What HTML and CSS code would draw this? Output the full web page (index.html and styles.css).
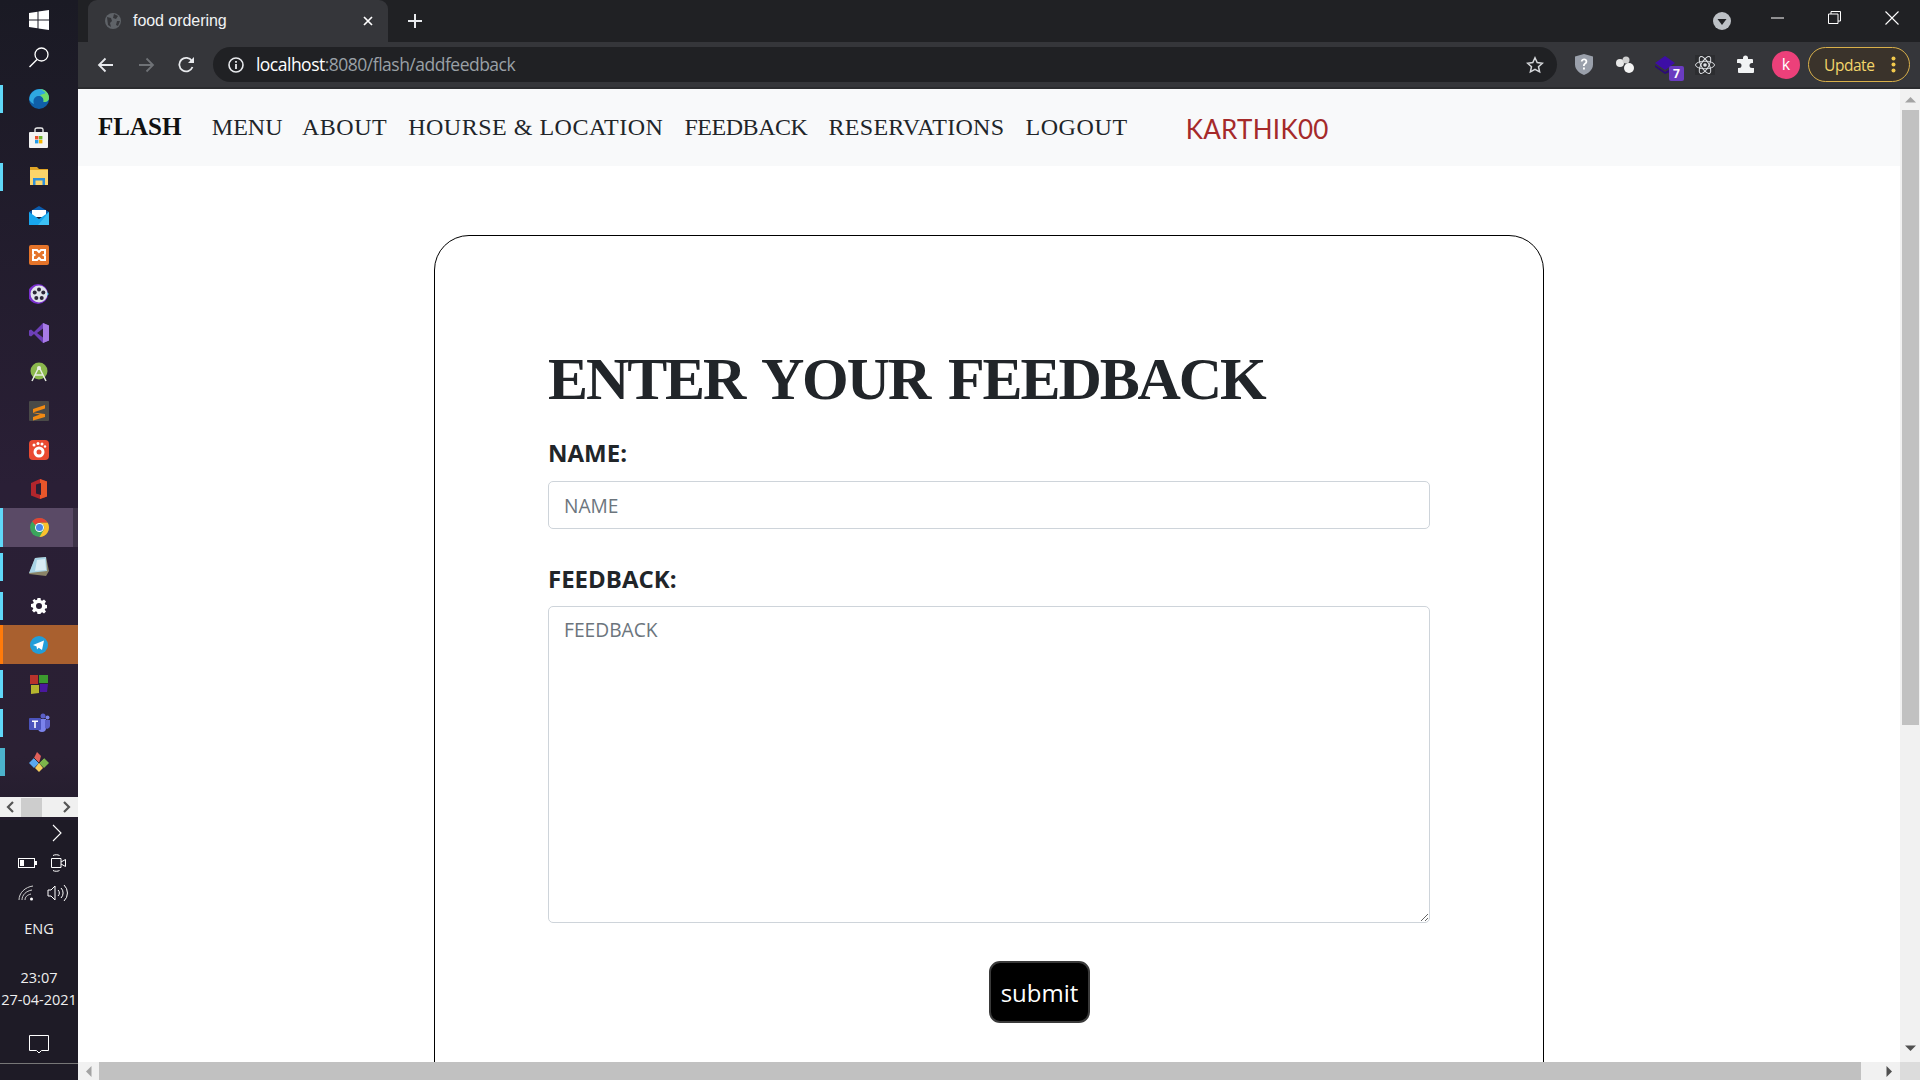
FILE: index.html
```html
<!DOCTYPE html>
<html lang="en">
<head>
<meta charset="utf-8">
<title>food ordering</title>
<link rel="stylesheet" href="styles.css">
</head>
<body>
<div class="desktop">
  <aside class="taskbar">
    <div class="tb-icons">
      <div class="tb-item tb-win"><svg width="20" height="20" viewBox="0 0 20 20"><path fill="#fff" d="M0 3l8.500-1.200v7.700H0zM9.500 1.600L20 0v9.500H9.500zM0 10.500h8.500v7.700L0 17zM9.500 10.500H20V20L9.500 18.400z"/></svg></div>
      <div class="tb-item tb-search"><svg width="22" height="22" viewBox="0 0 22 22"><circle cx="13.500" cy="8.500" r="6.500" fill="none" stroke="#fff" stroke-width="1.300"/><path d="M9 13.500L1.500 21" stroke="#fff" stroke-width="1.500"/></svg></div>
      <div class="tb-item tb-run"><svg width="20" height="20" viewBox="0 0 20 20"><circle cx="10" cy="10" r="10" fill="#0f5fa8"/><path d="M.3 11C0 4 6 0 11 0c5 0 9 4 9 9 0 3-3 4.500-5.500 4 1-4-2-6.500-5.500-6-3.500.5-5.500 4-4 8C3 14 1 12.500.3 11z" fill="#2fa8e0"/><path d="M11 0c5 0 9 4 9 9 0 3-3 4.500-5.500 4 .5-3-1-5.500-3.500-6.500 2-1.500 5-2 5.500-2.500C15.500 2.500 13 .5 11 0z" fill="#6fdc6a"/></svg></div>
      <div class="tb-item"><svg width="20" height="21" viewBox="0 0 20 21"><path d="M6 6V2.500C6 1.500 7 1 8 1h4c1 0 2 .5 2 1.500V6" fill="none" stroke="#eee" stroke-width="1.300"/><rect y="5" width="19" height="16" rx="1" fill="#f2f2f2"/><rect x="6" y="9" width="3.400" height="3.400" fill="#e8512a"/><rect x="10" y="9" width="3.400" height="3.400" fill="#6eb52c"/><rect x="6" y="13" width="3.400" height="3.400" fill="#1e9bea"/><rect x="10" y="13" width="3.400" height="3.400" fill="#f5b400"/></svg></div>
      <div class="tb-item tb-run"><svg width="20" height="19" viewBox="0 0 20 19"><path d="M1 0h7l2 2h9v3H1z" fill="#e0a526"/><rect x="1" y="3" width="18" height="15" fill="#fbd56a"/><path d="M4 18v-7h12v7h-2.500v-4.500h-7V18z" fill="#2f8fd8"/></svg></div>
      <div class="tb-item"><svg width="20" height="19" viewBox="0 0 20 19"><path d="M0 6l10-6 10 6v4H0z" fill="#0b5cad"/><path d="M3 4h14v7H3z" fill="#fff"/><path d="M0 6l10 7 10-7v13H0z" fill="#18a6ee"/><path d="M20 6v13H9z" fill="#3cc1f5"/></svg></div>
      <div class="tb-item"><svg width="20" height="20" viewBox="0 0 20 20"><rect width="20" height="20" rx="2" fill="#e5742a"/><path d="M4 5h4l2 2 2-2h4v4l-1.500 1 1.500 1v4h-4l-2-2-2 2H4v-4l1.500-1L4 9z" fill="none" stroke="#fff" stroke-width="2"/></svg></div>
      <div class="tb-item"><svg width="20" height="20" viewBox="0 0 20 20"><circle cx="9" cy="10" r="10" fill="#7a2fd0"/><path d="M14 5l6 5-6 5z" fill="#25b5ea"/><circle cx="10" cy="10" r="8.500" fill="#dfe3ea"/><circle cx="10" cy="5.500" r="2" fill="#2b2738"/><circle cx="5.700" cy="8.500" r="2" fill="#2b2738"/><circle cx="14.300" cy="8.500" r="2" fill="#2b2738"/><circle cx="7.300" cy="14" r="2" fill="#2b2738"/><circle cx="12.700" cy="14" r="2" fill="#2b2738"/></svg></div>
      <div class="tb-item"><svg width="20" height="20" viewBox="0 0 20 20"><path d="M14 0l6 2.500v15L14 20 5 11l-3 2.500L0 12.500v-5L2 6.500l3 2.500z" fill="#6d3fb8"/><path d="M14 0l6 2.500v15L14 20z" fill="#a77be6"/><path d="M14 5.500L8 10l6 4.500z" fill="#2a2135"/></svg></div>
      <div class="tb-item"><svg width="20" height="20" viewBox="0 0 20 20"><circle cx="10" cy="9" r="8.500" fill="#8bb84d"/><path d="M3 19l6-12h2l6 12M6 13h8" fill="none" stroke="#e8ece2" stroke-width="1.500"/><circle cx="10" cy="6" r="2" fill="#e8ece2"/></svg></div>
      <div class="tb-item"><svg width="20" height="20" viewBox="0 0 20 20"><rect width="20" height="20" rx="1" fill="#4a4a48"/><path d="M4 8l12-4v3.500L4 11.500zM4 11.500l12 1.500v3L4 19.500V16l7-2.500L4 12z" fill="#f28a13"/></svg></div>
      <div class="tb-item"><svg width="20" height="20" viewBox="0 0 20 20"><rect width="20" height="20" rx="4" fill="#ea4a31"/><circle cx="10" cy="12" r="5.500" fill="#fff"/><circle cx="10" cy="12" r="2.500" fill="#ea4a31"/><circle cx="5" cy="5" r="1.500" fill="#fff"/><circle cx="9" cy="3.500" r="1.500" fill="#fff"/><circle cx="13" cy="4" r="1.500" fill="#fff"/><circle cx="16" cy="6.500" r="1.200" fill="#fff"/></svg></div>
      <div class="tb-item"><svg width="16" height="20" viewBox="0 0 16 20"><path d="M0 4l9-4 7 2.500v15L9 20l-9-3.500z" fill="#b3262c"/><path d="M9 0l7 2.500v15L9 20z" fill="#e8562a"/><path d="M5 5.500l5-1.500v12l-5-1.500z" fill="#2a1f35"/></svg></div>
      <div class="tb-item tb-run tb-active"><svg width="19" height="19" viewBox="0 0 20 20"><circle cx="10" cy="10" r="10" fill="#3ba55d"/><path d="M10 0a10 10 0 0 1 8.660 5H10a5 5 0 0 0-4.300 2.500L2.300 3.500A10 10 0 0 1 10 0z" fill="#e34234"/><path d="M18.660 5A10 10 0 0 1 10 20l4.300-7.500A5 5 0 0 0 10 5z" fill="#fbc02d"/><circle cx="10" cy="10" r="4.700" fill="#fff"/><circle cx="10" cy="10" r="3.700" fill="#4a86e8"/></svg></div>
      <div class="tb-item tb-run"><svg width="20" height="20" viewBox="0 0 20 20"><path d="M6 1l11-1 3 14-3 5-17-2z" fill="#8a8468"/><path d="M6 1l11-1 1 14L0 16z" fill="#a9d4e6"/><path d="M8 3l8-1 1 11-11 1z" fill="#d9edf5"/></svg></div>
      <div class="tb-item tb-run"><svg width="16" height="16" viewBox="0 0 16 16"><path fill="#fff" fill-rule="evenodd" d="M6.500 0h3l.4 2.200 1.300.6L13 1.500l2 2-1.300 1.900.6 1.300 2.200.4v3l-2.200.4-.6 1.300 1.300 1.800-2 2-1.800-1.300-1.300.6L9.500 16h-3l-.4-2.100-1.300-.6L3 14.500l-2-2 1.300-1.800-.6-1.300L0 9V6l2.200-.4.6-1.300L1.500 2.500l2-1.500 1.300 1.300 1.300-.6zM8 5a3 3 0 1 0 0 6 3 3 0 0 0 0-6z"/></svg></div>
      <div class="tb-item tb-alert"><svg width="18" height="18" viewBox="0 0 18 18"><circle cx="9" cy="9" r="9" fill="#229ed9"/><path d="M3 9l11-4.500-2 9.500-3.300-2.300L7 13.500l-.4-3z" fill="#fff"/></svg></div>
      <div class="tb-item tb-run"><svg width="20" height="20" viewBox="0 0 20 20"><path d="M1 1l8 0v9H1z" fill="#b8332c"/><path d="M10 1h9v8h-9z" fill="#3c9a2e"/><path d="M2 11h8v8l-8 1z" fill="#b5b52e"/><path d="M11 10h8l-1 8h-7z" fill="#4a189e"/></svg></div>
      <div class="tb-item tb-run"><svg width="21" height="20" viewBox="0 0 21 20"><circle cx="14" cy="3" r="2.500" fill="#5b5fc7"/><circle cx="18.500" cy="4.500" r="2" fill="#7b83eb"/><path d="M9 6h8v9a4 4 0 0 1-8 0z" fill="#7b83eb"/><path d="M16 7h5v6a3 3 0 0 1-5 2z" fill="#5b5fc7"/><rect y="5" width="12" height="12" rx="1" fill="#4b53bc"/><path d="M3 7.500h6v1.600H6.800V15H5.200V9.100H3z" fill="#fff"/></svg></div>
      <div class="tb-item tb-run tb-double"><svg width="20" height="20" viewBox="0 0 20 20"><path d="M5 6l5 5-5 5-5-5z" fill="#5aa8ef"/><path d="M15 6l5 5-5 5-5-5z" fill="#7db54a"/><path d="M10 11l4 5-4 4-4-4z" fill="#f3cc5f"/><path d="M8 0l4 4-2 7-5-5z" fill="#e0605a"/><path d="M5 6l5 5 5-5" stroke="#333" stroke-width="1" fill="none"/></svg></div>
    </div>
    <div class="tb-scroll">
      <svg width="10" height="14" viewBox="0 0 10 14"><path d="M8 2L3 7l5 5" fill="none" stroke="#555" stroke-width="2.200"/></svg>
      <span class="tb-thumb"></span>
      <svg class="tb-next" width="10" height="14" viewBox="0 0 10 14"><path d="M2 2l5 5-5 5" fill="none" stroke="#555" stroke-width="2.200"/></svg>
    </div>
    <div class="tray">
      <div class="tray-chevron"><svg width="12" height="18" viewBox="0 0 12 18"><path d="M2 1l8 8-8 8" fill="none" stroke="#fff" stroke-width="1.100"/></svg></div>
      <div class="tray-row">
        <svg width="20" height="12" viewBox="0 0 20 12"><rect x=".5" y="1.500" width="16" height="9" fill="none" stroke="#fff"/><rect x="2" y="3" width="4" height="6" fill="#fff"/><rect x="17" y="4" width="2" height="4" fill="#fff"/></svg>
        <svg width="15" height="18" viewBox="0 0 15 18"><path d="M.5 4.500h9.500v9H.5zM10 8l4.500-2.500v7L10 10M2 1.500C3.500.5 7 .5 8.500 1.500M2 16.500c1.500 1 5 1 6.500 0" fill="none" stroke="#fff"/></svg>
      </div>
      <div class="tray-row">
        <svg width="17" height="16" viewBox="0 0 17 16"><g fill="none" stroke="#cfcfcf"><path d="M1 15C1 8 7 2 15 1"/><path d="M4 15c0-5 4-9 10-10"/><path d="M7 15c0-3 2-5 6-6"/></g><circle cx="13.500" cy="14" r="1.500" fill="#fff"/></svg>
        <svg width="21" height="18" viewBox="0 0 21 18"><path d="M1 6v6h3l4 4V2L4 6zM11 6a4 4 0 0 1 0 6M14 4a7 7 0 0 1 0 10M17 1a11 11 0 0 1 0 16" fill="none" stroke="#fff"/></svg>
      </div>
      <div class="tray-lang">ENG</div>
      <div class="tray-clock"><div>23:07</div><div>27-04-2021</div></div>
      <div class="tray-note"><svg width="20" height="20" viewBox="0 0 20 20"><path d="M.5 1.500h19v15h-7L10 19l-2.500-2.500h-7z" fill="none" stroke="#fff"/></svg></div>
    </div>
  </aside>

  <main class="browser">
    <div class="tabstrip">
      <div class="tab">
        <svg class="favicon" width="16" height="16" viewBox="0 0 16 16"><circle cx="8" cy="8" r="8" fill="#5f6368"/><path d="M2 4l4 1 1 3-2 2 1 4-3-2zM9 1l4 2-2 3-3-1zM12 8l3 0-2 5-2-1z" fill="#35363a"/></svg>
        <span class="tab-title">food ordering</span>
        <svg width="10" height="10" viewBox="0 0 10 10"><path d="M1 1l8 8M9 1l-8 8" stroke="#fff" stroke-width="1.700"/></svg>
      </div>
      <svg class="newtab" width="14" height="14" viewBox="0 0 14 14"><path d="M7 0v14M0 7h14" stroke="#e8eaed" stroke-width="2"/></svg>
      <div class="winctl">
        <svg class="profile-drop" width="18" height="18" viewBox="0 0 18 18"><circle cx="9" cy="9" r="9" fill="#bdc1c6"/><path d="M4.500 7h9L9 13z" fill="#202124"/></svg>
        <span class="winbtn"><svg width="13" height="2" viewBox="0 0 13 2"><path d="M0 1h13" stroke="#fff"/></svg></span>
        <span class="winbtn"><svg width="13" height="13" viewBox="0 0 13 13"><path d="M.5 3h9.500v9.500H.5zM3 3V.5h9.500V10H10" fill="none" stroke="#fff"/></svg></span>
        <span class="winbtn"><svg width="14" height="14" viewBox="0 0 14 14"><path d="M.5.5l13 13M13.500.5l-13 13" stroke="#fff" stroke-width="1.100"/></svg></span>
      </div>
    </div>
    <div class="toolbar">
      <span class="navbtn"><svg width="17" height="16" viewBox="0 0 17 16"><path d="M16 8H2M8.500 1.500L2 8l6.500 6.500" fill="none" stroke="#e8eaed" stroke-width="1.800"/></svg></span>
      <span class="navbtn"><svg width="17" height="16" viewBox="0 0 17 16"><path d="M1 8h14M8.500 1.500L15 8l-6.500 6.500" fill="none" stroke="#6f7276" stroke-width="1.800"/></svg></span>
      <span class="navbtn"><svg width="17" height="17" viewBox="0 0 17 17"><path d="M14.500 11a6.800 6.800 0 1 1-.6-6" fill="none" stroke="#e8eaed" stroke-width="1.800"/><path d="M16 1v6h-6z" fill="#e8eaed"/></svg></span>
      <div class="omnibox">
        <svg width="16" height="16" viewBox="0 0 16 16"><circle cx="8" cy="8" r="7" fill="none" stroke="#e8eaed" stroke-width="1.600"/><path d="M8 7v5M8 4v1.800" stroke="#e8eaed" stroke-width="1.800"/></svg>
        <span class="url"><span class="url-host">localhost</span>:8080/flash/addfeedback</span>
        <svg class="star" width="18" height="18" viewBox="0 0 18 18"><path d="M9 1.800l2.200 4.800 5.200.6-3.900 3.500 1.100 5.200L9 13.300l-4.600 2.600 1.100-5.200-3.900-3.500 5.200-.6z" fill="none" stroke="#d5d7da" stroke-width="1.500"/></svg>
      </div>
      <div class="exts">
        <span class="ext"><svg width="18" height="21" viewBox="0 0 18 21"><path d="M9 0l9 2.500v8C18 16 13 19.500 9 21 5 19.500 0 16 0 10.500v-8z" fill="#9aa0ab"/><path d="M5.800 7.500C6 3.500 12.500 3.500 12.300 7.500c0 2.500-2.500 2.500-2.500 4.500H8c0-3 2.500-3 2.500-4.500C10.500 5.800 7.800 5.800 7.600 7.500zM8 13.500h1.900v2H8z" fill="#fff"/></svg></span>
        <span class="ext"><svg width="20" height="20" viewBox="0 0 20 20"><circle cx="5" cy="8" r="4" fill="#e8e8e8"/><circle cx="11" cy="5" r="3.500" fill="#cfcfcf"/><circle cx="14" cy="13" r="5" fill="#f4f4f4"/></svg></span>
        <span class="ext ext-badged"><svg width="20" height="18" viewBox="0 0 20 18"><path d="M10 0l10 7-10 7L0 7z" fill="#3d0ea6"/><path d="M0 9l10 7 5-3v3l-5 2L0 11z" fill="#2c0a78"/></svg><b class="badge">7</b></span>
        <span class="ext"><svg class="react" width="20" height="20" viewBox="0 0 20 20"><g fill="none" stroke="#dfe1e5" stroke-width="1"><ellipse cx="10" cy="10" rx="9.500" ry="3.800"/><ellipse cx="10" cy="10" rx="9.500" ry="3.800" transform="rotate(60 10 10)"/><ellipse cx="10" cy="10" rx="9.500" ry="3.800" transform="rotate(120 10 10)"/></g><circle cx="10" cy="10" r="1.800" fill="#dfe1e5"/></svg></span>
        <span class="ext"><svg width="19" height="19" viewBox="0 0 19 19"><path d="M7 3a2.500 2.500 0 0 1 5 0v1h4a1 1 0 0 1 1 1v3h-1a2.500 2.500 0 0 0 0 5h2v4a1 1 0 0 1-1 1H3a1 1 0 0 1-1-1v-4h1a2.500 2.500 0 0 0 0-5H1V5a1 1 0 0 1 1-1h5z" fill="#f1f3f4"/></svg></span>
        <span class="avatar">k</span>
      </div>
      <div class="update">
        <span class="update-text">Update</span>
        <svg width="5" height="17" viewBox="0 0 5 17"><circle cx="2.500" cy="2.500" r="2" fill="#f2c94c"/><circle cx="2.500" cy="8.500" r="2" fill="#f2c94c"/><circle cx="2.500" cy="14.500" r="2" fill="#f2c94c"/></svg>
      </div>
    </div>

    <div class="viewport">
      <div class="page">
        <nav class="navbar">
          <a class="brand">FLASH</a>
          <a class="nav-link nav-menu">MENU</a>
          <a class="nav-link nav-about">ABOUT</a>
          <a class="nav-link nav-hours">HOURSE &amp; LOCATION</a>
          <a class="nav-link nav-feedback">FEEDBACK</a>
          <a class="nav-link nav-reserve">RESERVATIONS</a>
          <a class="nav-link nav-logout">LOGOUT</a>
          <span class="username">KARTHIK00</span>
        </nav>
        <section class="card">
          <h1 class="title">ENTER YOUR FEEDBACK</h1>
          <form class="form">
            <label class="label" for="name">NAME:</label>
            <input class="control input" id="name" type="text" placeholder="NAME">
            <label class="label label-gap" for="fb">FEEDBACK:</label>
            <textarea class="control textarea" id="fb" placeholder="FEEDBACK"></textarea>
            <button class="submit" type="button">submit</button>
          </form>
        </section>
      </div>
      <div class="vscroll">
        <svg width="13" height="7" viewBox="0 0 13 7"><path d="M6.500 1L12 6.500H1z" fill="#a3a3a3"/></svg>
        <span class="vthumb"></span>
        <svg width="13" height="7" viewBox="0 0 13 7"><path d="M6.500 6L12 .5H1z" fill="#505050"/></svg>
      </div>
    </div>
    <div class="hscroll">
      <svg width="7" height="13" viewBox="0 0 7 13"><path d="M1 6.500L6.500 1v11z" fill="#a3a3a3"/></svg>
      <span class="hthumb"></span>
      <svg width="7" height="13" viewBox="0 0 7 13"><path d="M6 6.500L.5 1v11z" fill="#505050"/></svg>
      <span class="corner"></span>
    </div>
  </main>
</div>
</body>
</html>
```
FILE: styles.css
```css
* { box-sizing: border-box; }
html, body { margin: 0; height: 100%; overflow: hidden; }
.desktop { display: flex; width: 1920px; height: 1080px; font-family: "Open Sans", sans-serif; }

/* taskbar */
.taskbar {
  width: 78px; flex: none; display: flex; flex-direction: column;
  background: linear-gradient(#1a1a24 0, #2a1f36 45%, #2a2033 70%, #1f1b29 80%, #1c1c26 100%);
  color: #fff;
}
.tb-icons { height: 797px; padding-top: 1px; }
.tb-item { height: 39px; display: flex; align-items: center; justify-content: center; position: relative; }
.tb-win svg { margin-bottom: 2px; }
.tb-search svg { margin-bottom: 5px; }
.tb-run::before {
  content: ""; position: absolute; left: 0; top: 6px; width: 3px; height: 28px; background: #60d8f8;
}
.tb-double::before { width: 5px; background: #4cb3cc; }
.tb-active { background: linear-gradient(90deg, #5a4a66 0, #5a4a66 73px, #3e3448 73px); }
.tb-active::before { top: 0; height: 39px; }
.tb-alert { background: #a9602f; }
.tb-alert::before { content: ""; position: absolute; left: 0; top: 0; width: 3px; height: 39px; background: #ff7a0a; }
.tb-scroll {
  height: 20px; background: #f0f0f0; display: flex; align-items: center;
  padding: 0 6px 0 5px;
}
.tb-thumb { width: 21px; height: 19px; margin-left: 6px; background: #cdcdcd; }
.tb-next { margin-left: auto; }
.tray { flex: 1; display: flex; flex-direction: column; background: #1e1b26; margin-top: 3px; }
.tray-chevron { height: 28px; display: flex; align-items: center; justify-content: flex-end; padding: 0 15px 2px 0; }
.tray-row { height: 30px; display: flex; align-items: center; justify-content: space-between; padding: 0 12px 0 18px; }
.tray-row + .tray-row { padding-right: 10px; }
.tray-lang { height: 34px; margin-top: 4px; text-align: center; font-size: 14.500px; line-height: 34px; color: #eee; }
.tray-clock { margin-top: 21px; text-align: center; font-size: 14.500px; line-height: 22px; color: #eee; white-space: nowrap; }
.tray-note { display: flex; justify-content: center; margin-top: 23px; height: 30px; border-bottom: 1px solid #777; }

/* browser chrome */
.browser { flex: 1; min-width: 0; display: flex; flex-direction: column; }
.tabstrip { height: 42px; flex: none; background: #202124; display: flex; align-items: center; padding-left: 10px; }
.tab {
  width: 300px; height: 42px; background: #35363a; border-radius: 9px 9px 0 0;
  display: flex; align-items: center; padding: 0 15px 0 17px; color: #fff;
}
.favicon { flex: none; }
.tab-title { flex: 1; margin-left: 12px; font: 16px "Liberation Sans", sans-serif; color: #f1f3f4; letter-spacing: -.05px; }
.newtab { margin-left: 20px; }
.winctl { margin-left: auto; display: flex; align-items: center; height: 42px; }
.profile-drop { margin-right: 18px; }
.winbtn { width: 57px; height: 35px; margin-bottom: 7px; display: flex; align-items: center; justify-content: center; }
.toolbar {
  height: 47px; flex: none; background: #35363a; border-bottom: 2px solid #2b2c2f;
  display: flex; align-items: center; padding: 0 10px 0 8px;
}
.navbtn { width: 40px; margin-right: .5px; display: flex; justify-content: center; }
.omnibox {
  width: 1345px; height: 35px; margin-left: 5.500px; background: #202124; border-radius: 18px;
  display: flex; align-items: center; padding: 0 13px 0 15px;
}
.url { flex: 1; margin-left: 12px; font: 17.500px/34px "Open Sans", sans-serif; height: 35px; letter-spacing: -.5px; color: #9aa0a6; }
.url-host { color: #fff; }
.exts { display: flex; align-items: center; margin-left: 7px; }
.ext { width: 40.400px; height: 35px; display: flex; align-items: center; justify-content: center; position: relative; }
.badge {
  position: absolute; left: 24px; top: 19px; width: 15px; height: 15px; border-radius: 2px;
  background: #6a3cc0; color: #fff; font: bold 12px/15px "Open Sans", sans-serif; text-align: center;
}
.react { background: #2c2d30; }
.avatar {
  width: 28px; height: 28px; margin-left: 6px; border-radius: 50%; background: #ec407a; color: #fff;
  font: 16px/27px "Open Sans", sans-serif; text-align: center;
}
.update {
  width: 102px; height: 35px; margin-left: 8px; border: 1px solid #d9b04a; border-radius: 18px; background: #3a332b;
  display: flex; align-items: center; justify-content: space-between; padding: 0 13px 0 15px;
}
.update-text { font: 15.500px "Open Sans", sans-serif; color: #f3d56a; letter-spacing: -.45px; }

/* page */
.viewport { flex: 1; min-height: 0; display: flex; }
.page { flex: 1; min-width: 0; overflow: hidden; background: #fff; }
.navbar { height: 77px; background: #f8f9fa; display: flex; align-items: center; padding: 0 0 1px 20px; }
.brand { font: bold 25px "Liberation Serif", serif; color: #111; margin-right: 30.500px; }
.nav-link { font: 24px "Liberation Serif", serif; color: #212529; margin-right: 21px; }
.nav-menu { margin-right: 19.500px; }
.nav-about { letter-spacing: .5px; }
.nav-hours { letter-spacing: .5px; }
.nav-feedback { letter-spacing: -.45px; }
.nav-reserve { letter-spacing: .3px; }
.nav-logout { letter-spacing: .6px; }
.username { margin-left: 37px; margin-top: 3px; font: 26px "Lato", sans-serif; color: #a52a2a; letter-spacing: .3px; }
.card {
  width: 1110px; margin: 69px 0 0 356px; height: 1000px; padding: 107px 0 0 113px;
  border: 1px solid #000; border-radius: 35px;
}
.title { margin: 0 0 20px; font: bold 60px/72px "Liberation Serif", serif; letter-spacing: -2.100px; word-spacing: 6px; color: #212529; white-space: nowrap; }
.form { width: 882px; display: flex; flex-direction: column; align-items: flex-start; }
.label { font: bold 24px/36px "Open Sans", sans-serif; color: #212529; margin-bottom: 10px; }
.label-gap { margin-top: 32px; margin-bottom: 9px; }
.control {
  display: block; width: 100%; border: 1px solid #ced4da; border-radius: 5px; background: #fff; outline: 0;
  font: 19.200px "Open Sans", sans-serif; color: #495057; padding: 8px 15px;
}
.control::placeholder { color: #6c757d; opacity: 1; }
.input { height: 48px; }
.textarea { height: 317px; padding-top: 9px; }
.submit {
  margin: 38px 0 0 441px; width: 101px; height: 62px; background: #000; color: #fff;
  border: 2px solid #3a3a3a; border-radius: 11px; font: 24px "Open Sans", sans-serif; padding: 0;
}

/* scrollbars */
.vscroll { width: 20px; flex: none; background: #f1f1f1; display: flex; flex-direction: column; align-items: center; padding: 7px 0 10px; }
.vthumb { width: 17px; height: 615px; margin-top: 7px; background: #c1c1c1; margin-left: 1px; }
.vscroll svg:last-child { margin-top: auto; }
.hscroll { height: 18px; flex: none; background: #f1f1f1; display: flex; align-items: center; padding-left: 7px; }
.hthumb { width: 1762px; height: 18px; margin: 0 25px 0 7px; background: #c1c1c1; }
.corner { width: 20px; height: 18px; margin-left: auto; background: #dcdcdc; }
```
